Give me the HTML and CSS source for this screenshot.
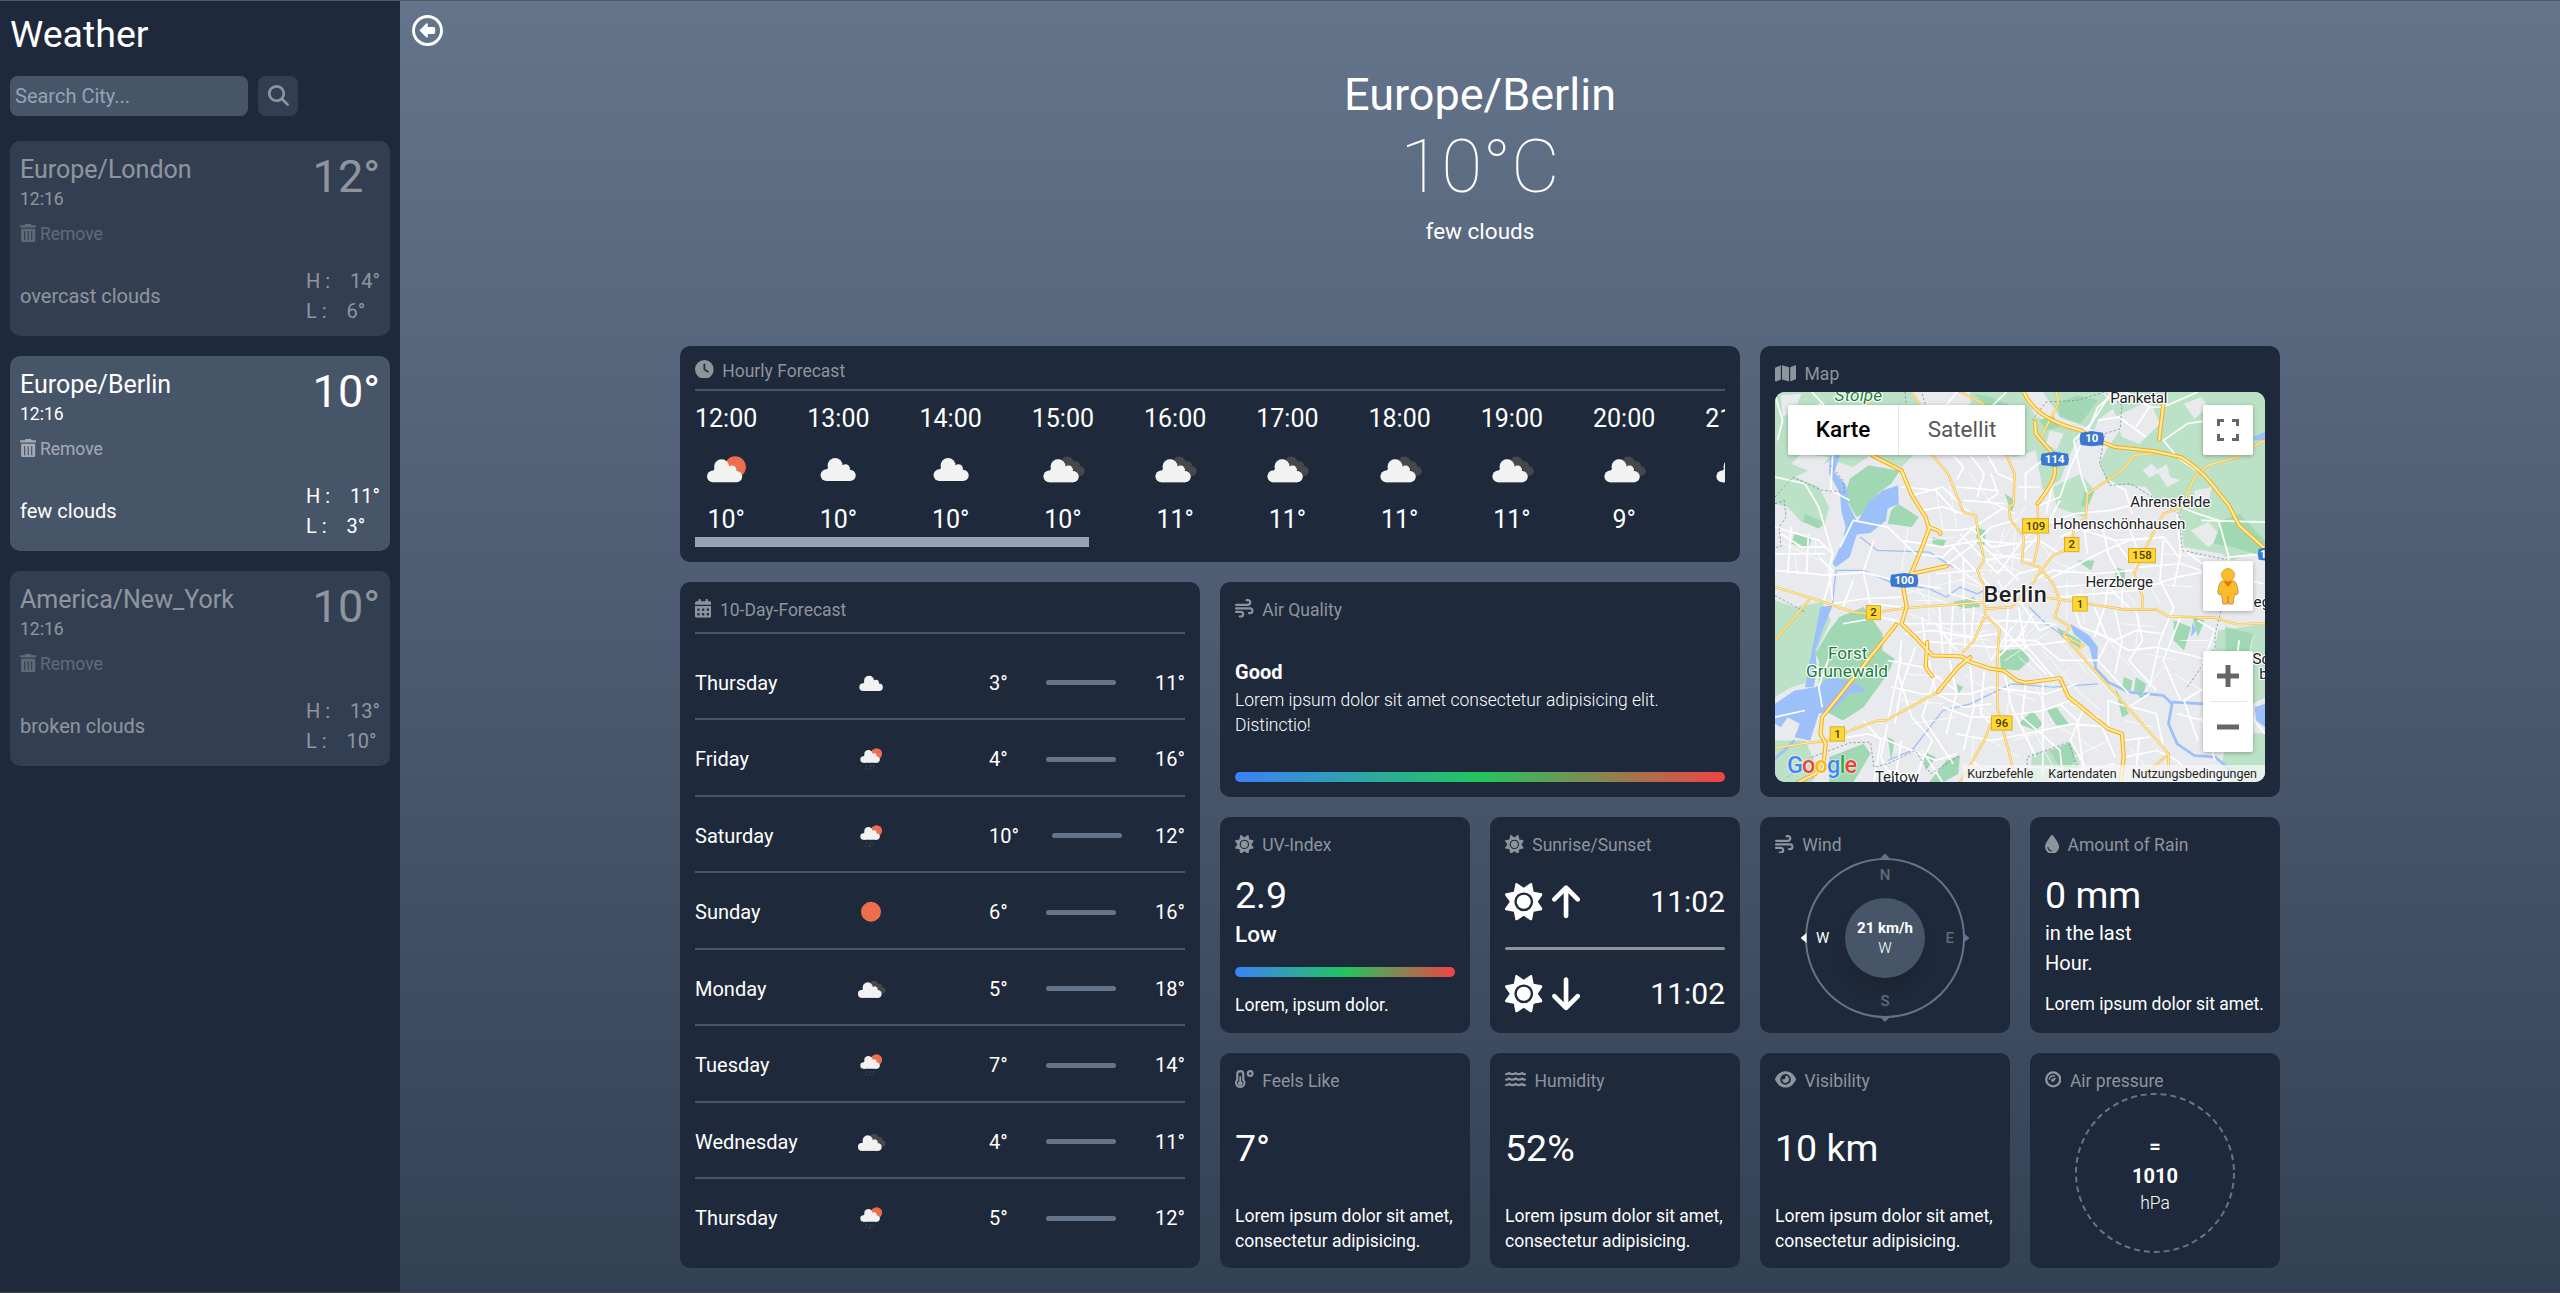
FILE: index.html
```html
<!DOCTYPE html>
<html lang="en">
<head>
<meta charset="utf-8">
<title>Weather</title>
<link rel="stylesheet" href="styles.css">
</head>
<body>
<svg class="defs" aria-hidden="true">
  <symbol id="clock" viewBox="0 0 512 512"><path d="M256 0a256 256 0 1 1 0 512A256 256 0 1 1 256 0zM232 120V256c0 8 4 15.5 10.7 20l96 64c11 7.4 25.9 4.4 33.3-6.7s4.4-25.9-6.7-33.3L280 243.2V120c0-13.3-10.7-24-24-24s-24 10.7-24 24z"/></symbol>
  <symbol id="trash" viewBox="0 0 448 512"><path d="M135.2 17.7C140.6 6.8 151.7 0 163.8 0H284.2c12.1 0 23.2 6.8 28.6 17.7L320 32h96c17.7 0 32 14.3 32 32s-14.3 32-32 32H32C14.3 96 0 81.7 0 64S14.3 32 32 32h96l7.2-14.3zM32 128H416V448c0 35.3-28.7 64-64 64H96c-35.3 0-64-28.7-64-64V128zm96 64c-8.8 0-16 7.2-16 16V432c0 8.8 7.2 16 16 16s16-7.2 16-16V208c0-8.8-7.2-16-16-16zm96 0c-8.8 0-16 7.2-16 16V432c0 8.8 7.2 16 16 16s16-7.2 16-16V208c0-8.8-7.2-16-16-16zm96 0c-8.8 0-16 7.2-16 16V432c0 8.8 7.2 16 16 16s16-7.2 16-16V208c0-8.8-7.2-16-16-16z"/></symbol>
  <symbol id="search" viewBox="0 0 512 512"><path d="M416 208c0 45.9-14.9 88.3-40 122.7L502.6 457.4c12.5 12.5 12.5 32.8 0 45.3s-32.8 12.5-45.3 0L330.7 376c-34.4 25.2-76.8 40-122.7 40C93.1 416 0 322.9 0 208S93.1 0 208 0S416 93.1 416 208zM208 352a144 144 0 1 0 0-288 144 144 0 1 0 0 288z"/></symbol>
  <symbol id="eye" viewBox="0 0 576 512"><path d="M288 32c-80.8 0-145.5 36.8-192.6 80.6C48.6 156 17.3 208 2.5 243.7c-3.3 7.9-3.3 16.7 0 24.6C17.3 304 48.6 356 95.4 399.4C142.5 443.2 207.2 480 288 480s145.5-36.8 192.6-80.6c46.8-43.5 78.1-95.4 93-131.1c3.3-7.9 3.3-16.7 0-24.6c-14.9-35.7-46.2-87.7-93-131.1C433.5 68.8 368.8 32 288 32zM144 256a144 144 0 1 1 288 0 144 144 0 1 1 -288 0zm144-64c0 35.3-28.7 64-64 64c-7.1 0-13.9-1.2-20.3-3.3c-5.5-1.8-11.9 1.6-11.7 7.4c.3 6.9 1.3 13.8 3.2 20.7c13.7 51.2 66.4 81.6 117.6 67.9s81.6-66.4 67.9-117.6c-11.1-41.5-47.8-69.4-88.6-71.1c-5.8-.2-9.2 6.1-7.4 11.7c2.1 6.4 3.3 13.2 3.3 20.3z"/></symbol>
  <symbol id="wind" viewBox="0 0 512 512"><path d="M288 32c0 17.7 14.3 32 32 32h32c17.7 0 32 14.3 32 32s-14.3 32-32 32H32c-17.7 0-32 14.3-32 32s14.3 32 32 32H352c53 0 96-43 96-96s-43-96-96-96H320c-17.7 0-32 14.3-32 32zm64 352c0 17.7 14.3 32 32 32h32c53 0 96-43 96-96s-43-96-96-96H32c-17.7 0-32 14.3-32 32s14.3 32 32 32H416c17.7 0 32 14.3 32 32s-14.3 32-32 32H384c-17.7 0-32 14.3-32 32zM128 512h32c53 0 96-43 96-96s-43-96-96-96H32c-17.7 0-32 14.3-32 32s14.3 32 32 32H160c17.7 0 32 14.3 32 32s-14.3 32-32 32H128c-17.7 0-32 14.3-32 32s14.3 32 32 32z"/></symbol>
  <symbol id="drop" viewBox="0 0 384 512"><path d="M192 512C86 512 0 426 0 320C0 228.8 130.2 57.7 166.6 11.7C172.6 4.2 181.5 0 191.1 0h1.8c9.6 0 18.5 4.2 24.5 11.7C253.8 57.7 384 228.8 384 320c0 106-86 192-192 192zM96 336c0-8.8-7.2-16-16-16s-16 7.2-16 16c0 61.9 50.1 112 112 112c8.8 0 16-7.2 16-16s-7.2-16-16-16c-44.2 0-80-35.8-80-80z"/></symbol>
  <symbol id="sun" viewBox="0 0 512 512"><path d="M361.5 1.2c5 2.1 8.6 6.6 9.6 11.9L391 121l107.9 19.8c5.3 1 9.8 4.6 11.9 9.6s1.5 10.7-1.6 15.2L446.9 256l62.3 90.3c3.1 4.5 3.7 10.2 1.6 15.2s-6.6 8.6-11.9 9.6L391 391 371.1 498.9c-1 5.3-4.6 9.8-9.6 11.9s-10.7 1.5-15.2-1.6L256 446.9l-90.3 62.3c-4.5 3.1-10.2 3.7-15.2 1.6s-8.6-6.6-9.6-11.9L121 391 13.1 371.1c-5.3-1-9.8-4.6-11.9-9.6s-1.5-10.7 1.6-15.2L65.1 256 2.8 165.7c-3.1-4.5-3.7-10.2-1.6-15.2s6.6-8.6 11.9-9.6L121 121 140.9 13.1c1-5.3 4.6-9.8 9.6-11.9s10.7-1.5 15.2 1.6L256 65.1 346.3 2.8c4.5-3.1 10.2-3.7 15.2-1.6zM160 256a96 96 0 1 1 192 0 96 96 0 1 1 -192 0zm224 0a128 128 0 1 0 -256 0 128 128 0 1 0 256 0z"/></symbol>
  <symbol id="up" viewBox="0 0 384 512"><path d="M214.6 41.4c-12.5-12.5-32.8-12.5-45.3 0l-160 160c-12.5 12.5-12.5 32.8 0 45.3s32.8 12.5 45.3 0L160 141.2V448c0 17.7 14.3 32 32 32s32-14.3 32-32V141.2L329.4 246.6c12.5 12.5 32.8 12.5 45.3 0s12.5-32.8 0-45.3l-160-160z"/></symbol>
  <symbol id="map" viewBox="0 0 576 512"><path d="M384 476.1L192 421.2V35.9L384 90.8V476.1zm32-1.2V88.4L543.1 37.5c15.8-6.3 32.9 5.3 32.9 22.3V394.6c0 9.8-6 18.6-15.1 22.3L416 474.8zM15.1 95.1L160 37.2V423.6L32.9 474.5C17.1 480.8 0 469.2 0 452.2V117.4c0-9.8 6-18.6 15.1-22.3z"/></symbol>
  <symbol id="calendar" viewBox="0 0 448 512"><path d="M128 0c17.7 0 32 14.3 32 32V64H288V32c0-17.7 14.3-32 32-32s32 14.3 32 32V64h48c26.5 0 48 21.5 48 48v48H0V112C0 85.5 21.5 64 48 64H96V32c0-17.7 14.3-32 32-32zM0 192H448V464c0 26.5-21.5 48-48 48H48c-26.5 0-48-21.5-48-48V192zm64 80v32c0 8.8 7.2 16 16 16h32c8.8 0 16-7.2 16-16V272c0-8.8-7.2-16-16-16H80c-8.8 0-16 7.2-16 16zm128 0v32c0 8.8 7.2 16 16 16h32c8.8 0 16-7.2 16-16V272c0-8.8-7.2-16-16-16H208c-8.8 0-16 7.2-16 16zm144-16c-8.8 0-16 7.2-16 16v32c0 8.8 7.2 16 16 16h32c8.8 0 16-7.2 16-16V272c0-8.8-7.2-16-16-16H336zM64 400v32c0 8.8 7.2 16 16 16h32c8.8 0 16-7.2 16-16V400c0-8.8-7.2-16-16-16H80c-8.8 0-16 7.2-16 16zm144-16c-8.8 0-16 7.2-16 16v32c0 8.8 7.2 16 16 16h32c8.8 0 16-7.2 16-16V400c0-8.8-7.2-16-16-16H208zm112 16v32c0 8.8 7.2 16 16 16h32c8.8 0 16-7.2 16-16V400c0-8.8-7.2-16-16-16H336c-8.8 0-16 7.2-16 16z"/></symbol>
  <symbol id="thermo" viewBox="0 0 512 512"><path fill="none" stroke="currentColor" stroke-width="60" d="M62 112a82 82 0 0 1 164 0V270a114 114 0 1 1-164 0Z"/><path d="M120 190a24 24 0 0 1 48 0V308a62 62 0 1 1-48 0Z"/><circle cx="416" cy="96" r="66" fill="none" stroke="currentColor" stroke-width="60"/></symbol>
  <symbol id="waves" viewBox="0 0 576 512"><g fill="none" stroke="currentColor" stroke-width="62" stroke-linecap="round"><path d="M32 112Q90 110 115 84Q200 142 288 84Q376 142 461 84Q490 110 544 112"/><path d="M32 262Q90 260 115 234Q200 292 288 234Q376 292 461 234Q490 260 544 262"/><path d="M32 412Q90 410 115 384Q200 442 288 384Q376 442 461 384Q490 410 544 412"/></g></symbol>
  <symbol id="gauge" viewBox="0 0 448 512"><circle cx="224" cy="256" r="190" fill="none" stroke="currentColor" stroke-width="64"/><path d="M118 268a106 106 0 0 1 160-98" fill="none" stroke="currentColor" stroke-width="40"/><path d="M318 196 L250 298a42 42 0 1 1-50-56Z"/></symbol>

  <g id="cloud"><circle cx="5.9" cy="17.1" r="5.9"/><circle cx="14.6" cy="7.5" r="7.5"/><circle cx="25" cy="10.6" r="4.4"/><circle cx="29.6" cy="17.4" r="5.6"/><path d="M5.9 12L8 9L25 8L29.6 12V23H5.9Z"/></g>
  <symbol id="w-cloud" viewBox="0 0 62 66"><use href="#cloud" x="13.5" y="22" fill="#f2f2f0"/></symbol>
  <symbol id="w-few" viewBox="0 0 62 66"><circle cx="40.2" cy="31" r="10.7" fill="#ec6e4c"/><use href="#cloud" x="12" y="23.2" fill="#f2f2f0"/></symbol>
  <symbol id="w-broken" viewBox="0 0 62 66"><g fill="#48484a"><circle cx="35.4" cy="27" r="6.5"/><circle cx="43.3" cy="30" r="4.8"/><circle cx="48" cy="35" r="4.8"/><path d="M34 27h9l5 13H34Z"/></g><use href="#cloud" x="11.5" y="23.2" fill="#f2f2f0" stroke="#1e293b" stroke-width=".6"/><use href="#cloud" x="11.5" y="23.2" fill="#f2f2f0"/></symbol>
  <symbol id="w-rain" viewBox="0 0 62 66"><circle cx="39.3" cy="25.2" r="8.4" fill="#ec6e4c"/><use href="#cloud" transform="translate(15 19.4) scale(.83)" fill="#f2f2f0"/><path d="M25 42l-1.4 2.6M31 42l-1.4 2.6M35.6 42l-1.4 2.6M23 46.5l-1.2 2M29 46.5l-1.2 2.4M33 46.5l-1.2 2.4" stroke="#48484a" stroke-width="1.6"/></symbol>
  <symbol id="w-sun" viewBox="0 0 62 66"><circle cx="31" cy="32.6" r="15" fill="#ec6e4c"/></symbol>
</svg>

<div class="app">
  <aside class="sidebar">
    <h1 class="brand">Weather</h1>
    <form class="search">
      <input class="search-input" type="text" placeholder="Search City...">
      <button class="search-btn" type="button"><svg><use href="#search"/></svg></button>
    </form>
    <div class="cities">
      <article class="city dim">
        <div class="city-top"><div><h2>Europe/London</h2><p class="time">12:16</p><p class="remove"><svg><use href="#trash"/></svg>Remove</p></div><span class="city-temp">12°</span></div>
        <div class="city-bottom"><span>overcast clouds</span><div class="hl"><p>H :<b>14°</b></p><p>L :<b>6°</b></p></div></div>
      </article>
      <article class="city">
        <div class="city-top"><div><h2>Europe/Berlin</h2><p class="time">12:16</p><p class="remove"><svg><use href="#trash"/></svg>Remove</p></div><span class="city-temp">10°</span></div>
        <div class="city-bottom"><span>few clouds</span><div class="hl"><p>H :<b>11°</b></p><p>L :<b>3°</b></p></div></div>
      </article>
      <article class="city dim">
        <div class="city-top"><div><h2>America/New_York</h2><p class="time">12:16</p><p class="remove"><svg><use href="#trash"/></svg>Remove</p></div><span class="city-temp">10°</span></div>
        <div class="city-bottom"><span>broken clouds</span><div class="hl"><p>H :<b>13°</b></p><p>L :<b>10°</b></p></div></div>
      </article>
    </div>
  </aside>

  <main class="main">
    <svg class="back" viewBox="0 0 31 31"><circle cx="15.5" cy="15.5" r="14" fill="none" stroke="#fff" stroke-width="2.9"/><path d="M7.4 15.4L14.2 8.6Q15.8 7.6 15.8 9.4V12H21.6Q23.2 12 23.2 13.4V17.6Q23.2 19 21.6 19H15.8V21.6Q15.8 23.2 14.2 22.2Z" fill="#fff"/></svg>
    <header class="hero">
      <h2>Europe/Berlin</h2>
      <p class="hero-temp">10°C</p>
      <p class="hero-desc">few clouds</p>
    </header>

    <section class="grid">
      <div class="card hourly">
        <h3 class="head"><svg class="i1"><use href="#clock"/></svg>Hourly Forecast</h3>
        <div class="hours">
          <div><span>12:00</span><svg><use href="#w-few"/></svg><span>10°</span></div>
          <div><span>13:00</span><svg><use href="#w-cloud"/></svg><span>10°</span></div>
          <div><span>14:00</span><svg><use href="#w-cloud"/></svg><span>10°</span></div>
          <div><span>15:00</span><svg><use href="#w-broken"/></svg><span>10°</span></div>
          <div><span>16:00</span><svg><use href="#w-broken"/></svg><span>11°</span></div>
          <div><span>17:00</span><svg><use href="#w-broken"/></svg><span>11°</span></div>
          <div><span>18:00</span><svg><use href="#w-broken"/></svg><span>11°</span></div>
          <div><span>19:00</span><svg><use href="#w-broken"/></svg><span>11°</span></div>
          <div><span>20:00</span><svg><use href="#w-broken"/></svg><span>9°</span></div>
          <div><span>21:00</span><svg><use href="#w-broken"/></svg></div>
        </div>
        <div class="scroll"><i></i></div>
      </div>

      <div class="card mapcard">
        <h3 class="head"><svg class="i3"><use href="#map"/></svg>Map</h3>
        <div class="mapbox">
          <svg class="mapsvg" viewBox="73 155 1422 1171" preserveAspectRatio="none">
            <rect x="73" y="155" width="1422" height="1171" fill="#e8eaed"/>
            <g fill="#bbe2c6">
              <path d="M73 155H470L500 200L560 230L520 300L440 380L350 345L300 380L240 360L190 380L130 410L73 430Z"/>
              <path d="M73 420L130 410L200 440L230 500L215 560L150 545L110 500L73 490Z"/>
              <path d="M640 155H790L830 230L900 250L960 275L930 340L900 420L850 450L830 330L770 350L700 340L640 200Z"/>
              <path d="M850 155H1020L1060 200L1010 240L1000 270L900 230Z"/>
              <path d="M1040 320L1080 260L1050 200L1100 155H1495V620L1400 660L1370 640L1260 620L1245 510L1180 480L1150 440L1040 430L1015 370Z"/>
              <path d="M73 780L130 800L210 785L235 840L190 940L185 1020L120 1040L73 1070Z"/>
              <path d="M1360 870L1495 850V1070L1440 1100L1330 1020Z"/>
              <path d="M73 1200L160 1200L200 1290L180 1326H73Z"/>
              <path d="M880 440L960 400L1000 450L970 530L890 500Z"/>
              <path d="M1390 1170L1495 1180V1326H1400L1370 1270Z"/>
              <path d="M820 1240L940 1210L960 1280L860 1326H810Z"/>
            </g>
            <g fill="#e8eaed">
              <path d="M90 165L150 160L130 210L95 230Z"/><path d="M150 340L230 350L190 400L120 370Z"/><path d="M1060 230L1160 180L1190 250L1130 310L1080 290Z"/><path d="M1180 390L1210 370L1220 410L1250 420L1210 440Z"/><path d="M1140 390L1165 370L1190 395L1160 412Z"/><path d="M1260 190L1310 170L1330 200L1290 235Z"/><path d="M1290 450L1340 440L1330 500L1290 490Z"/><path d="M1350 200L1400 215L1380 250L1340 230Z"/><path d="M530 190L600 165L640 195L600 240L540 235Z"/><path d="M690 290L760 275L770 330L710 325Z"/><path d="M870 270L910 280L890 330L860 310Z"/><path d="M1400 900L1460 890L1450 950L1400 970Z"/><path d="M1280 570L1330 545L1370 590L1330 620Z"/>
            </g>
            <g fill="#a0d8b3">
              <path d="M290 415L345 375L435 392L410 430L370 460L345 510L310 530L275 470Z"/>
              <path d="M230 870L260 830L330 800L365 850L385 880L385 930L420 955L400 1000L330 1100L270 1140L215 1110L200 1060L200 960L190 940Z"/>
              <path d="M725 930L800 925L812 960L780 990L728 985Z"/>
              <path d="M430 490L490 530L470 560L400 550L410 510Z"/>
              <path d="M1370 540L1420 520L1495 600V650L1400 620L1345 610Z"/>
              <path d="M890 190L950 165L1010 180L960 250L900 230Z"/>
              <path d="M650 160L700 170L760 200L740 250L700 210Z"/>
              <path d="M1380 860L1460 880L1440 980L1380 960Z"/>
              <path d="M590 785L650 770L670 800L610 805Z"/><path d="M655 560L685 570L680 620L660 610Z"/><path d="M970 455L1000 450L985 490L960 500Z"/><path d="M1060 680L1090 690L1085 740L1060 730Z"/><path d="M1230 840L1280 860L1260 930L1230 900Z"/><path d="M1285 830L1320 840L1300 890Z"/><path d="M780 1150L820 1110L850 1150L830 1170Z"/><path d="M860 1110L890 1100L925 1150L890 1155Z"/><path d="M1085 1010L1110 1020L1105 1050L1080 1045Z"/><path d="M1120 1010L1150 1030L1140 1080L1115 1050Z"/><path d="M600 1030L620 1040L605 1060Z"/><path d="M950 660L1000 660L990 690Z"/><path d="M130 580L180 590L170 625L120 610Z"/><path d="M570 1260L610 1245L605 1300L560 1326H520Z"/><path d="M400 1190L420 1200L410 1260Z"/><path d="M230 1250L330 1210L350 1240L300 1326H230Z"/><path d="M870 1230L930 1205L945 1260L910 1300Z"/><path d="M600 215L640 215L650 250L610 255Z"/><path d="M890 860L960 900L960 925L905 890Z"/><path d="M740 460L770 480L760 520Z"/><path d="M530 590L570 600L560 620L530 610Z"/><path d="M160 520L215 545L200 565L155 545Z"/><path d="M1060 1040L1100 1120L1080 1130Z"/><path d="M840 240L880 225L900 260L860 270Z"/><path d="M500 1230L540 1250L510 1290Z"/>
            </g>
            <g fill="#9cc0f9">
              <path d="M232 345H262L245 395L280 435L285 490L312 545L345 485L385 450L430 435L432 490L400 505L395 540L350 578L310 582L290 650L250 680L240 670L270 600L278 560L265 510L262 460L230 400Z"/>
              <path d="M205 800L240 795L215 860L190 930L195 990L185 1040L160 1040L180 930Z"/>
              <path d="M73 1090L130 1050L190 1040L240 1010L300 1025L340 1050L290 1060L240 1110L200 1120L175 1200L130 1190L145 1150L110 1130L90 1160L73 1150Z"/>
              <path d="M930 850L985 885L1010 920L1005 1000L985 920L940 880Z"/>
              <path d="M1465 1100L1495 1090V1160L1470 1140Z"/><path d="M1460 290L1495 275V300L1465 300Z"/><path d="M1285 845L1295 870L1280 890Z"/>
            </g>
            <g fill="none" stroke="#9cc0f9">
              <path stroke-width="8" d="M1000 980L1040 1025L1100 1055L1200 1065L1225 1090L1215 1150L1240 1210L1290 1245L1350 1250L1410 1300M1225 1085L1320 1090M73 1255L130 1200"/>
              <path stroke-width="4" d="M250 690L330 690L420 730L520 745L570 770L610 740L660 760L700 740M320 590L370 630L520 635L590 680M810 800L860 850L930 900M400 1260L470 1230L560 1110L640 1090L760 1030L880 1040L1010 1030M250 690L240 790M690 740L780 780"/>
            </g>
            <g fill="none" stroke="#fff" stroke-width="5" stroke-linejoin="round">
              <path d="M73 410L160 430L200 500L240 640L230 690L240 780M73 690L230 705L330 695L440 725L560 745M200 650L240 690L215 780M73 560L200 600L240 640M120 560L110 700M170 580L165 700M73 640L220 640M90 580L150 620L220 620M240 345L235 450L290 480M262 620L300 540L400 560L480 640M300 720L270 800M330 700L350 790L440 800M270 850L380 830L440 845M240 790L330 775L440 770"/>
              <path d="M440 440L540 450L600 520M470 465L560 440L640 520M500 510L560 500L620 520M520 565L600 570L660 560M440 600L560 620L660 600L770 610M480 640L560 650L650 560L740 500M590 620L700 740M610 580L720 700M640 560L700 620M560 680L640 620L700 560L770 540M660 600L780 720M680 660L790 640L860 560L900 480M700 640L820 660M700 620L840 600L900 640M720 700L790 600L840 560M540 700L660 690M580 700L580 760L690 790M620 650L620 780M570 660L680 740M740 740L780 700L850 680M720 720L740 760L790 790L840 870M820 720L880 690L1000 700L1110 690M860 720L900 700L1010 640L1100 600L1200 590M880 740L1030 730L1100 800M900 770L1000 760L1120 750L1240 710L1340 690"/>
              <path d="M440 850L560 850L680 850L740 840L880 850M450 880L530 870L640 890L720 880M480 900L600 910L700 920L860 910L930 900M500 830L510 920M550 800L560 940M590 790L580 950M620 790L625 930M650 800L640 920M540 850L600 930M750 800L740 930M780 800L800 930M820 820L780 890L880 1010M840 870L890 850M740 900L830 900L900 960L1010 960M700 830L860 1000M760 860L700 960M800 870L720 950M520 960L540 1060L620 1100L700 1090M440 900L430 1000L470 1130L530 1200M400 960L500 980L600 1050M410 1040L500 1060L640 1060L700 1040L860 1060L950 1030M440 950L400 1140M480 920L440 1040L420 1150M540 1000L500 1130L590 1270M580 960L600 1060L570 1180M640 980L650 1100L620 1230M680 990L670 1120L700 1150M560 1100L640 1130L720 1130L850 1110L930 1080M600 1180L700 1200L800 1180L940 1150L1040 1160M740 1000L760 1100L830 1250M800 1030L790 1130L900 1230L910 1326M850 1020L850 1300M900 1090L950 1140L970 1300M930 1090L1010 1130L1060 1250M970 1100L930 1200L980 1290L1060 1270"/>
              <path d="M700 400L720 460L690 480L770 520M600 440L720 450M620 480L740 490M640 345L680 400L660 470M690 345L720 400L765 420M800 480L800 400L850 360M840 440L780 440M830 500L900 470L930 380L990 250L1050 155M860 520L880 420M838 560L940 520L1050 510L1160 480M900 590L970 560L980 640M940 560L1060 600L1100 660M1020 540L1040 640L1080 720L1080 800M1100 560L1130 640L1110 720M1060 600L1200 590L1245 650M1200 600L1190 720L1230 800L1190 900L1160 1040M1240 520L1250 640L1230 740M1250 620L1350 700M1130 680L1250 670L1310 690M1040 730L1030 800L1000 890M940 800L960 860L1060 900L1120 870L1200 880M1000 800L1040 900L1010 960L1100 1060M1060 810L1080 900L1060 1000M1120 810L1140 900L1100 960L1180 1050M1000 870L1100 930L1180 920L1340 960M1250 830L1200 960L1250 1080M1300 840L1350 870L1310 980L1340 1030L1260 1080L1300 1200M1160 1060L1100 1100L1040 1080L1040 1160M1110 1100L1180 1120L1200 1220M1080 1200L1160 1190M1090 1250L1180 1230L1240 1260L1300 1326M1130 1190L1120 1300M1240 1120L1350 1150L1440 1200"/>
              <path d="M1060 155L1010 200L990 250L940 300M1010 240L1070 230L1150 290M1090 155L1160 200L1200 200L1300 155M1160 200L1120 260M1200 300L1270 250L1330 240L1400 330M1250 500L1300 520L1360 540L1390 650L1495 640M1390 650L1370 700L1490 730M1310 540L1495 545M1040 420L1090 450L1110 520M980 460L960 400L940 300M1310 400L1240 350L1200 300M73 165L95 240L80 300M180 155L230 210L200 190M500 200L560 210L600 155M540 240L600 270M700 200L745 155M210 1100L200 1040L230 950M330 1140L380 1200L360 1326M400 1150L380 1250L400 1290L470 1326M230 1200L340 1180L400 1200L540 1260L600 1240M440 1200L420 1326M500 1230L560 1326M530 1200L500 1260L480 1326M640 1260L700 1300L820 1280L1060 1290M330 690L360 600M73 1130L160 1110M1310 1130L1350 1260M1420 900L1400 1060L1495 1180M590 345L620 380L600 420"/>
            </g>
            <g fill="none" stroke="#fff" stroke-width="2.6" stroke-opacity=".85">
              <path d="M440 740L690 830M450 760L680 700M460 820L660 900M470 720L560 850M520 700L520 850M610 720L720 760M640 690L750 690M650 640L800 700M660 580L740 650M740 560L700 700M770 560L760 700M800 500L720 620M840 600L880 660L960 700M900 600L860 660M920 720L920 840M960 730L970 850M990 700L1000 790M1060 720L1120 790M1140 700L1190 790M1160 730L1290 740M1200 640L1330 650M460 560L440 690M500 600L600 590M540 450L560 560M580 440L600 560M640 400L720 520M450 1000L560 1010M440 1080L560 1090M470 1150L600 1130M620 1000L720 1070M660 1090L760 1180M720 1040L830 1080M760 1010L740 1160M830 1040L880 1150M900 900L980 1000M850 930L960 1060M780 950L850 1010M930 980L870 1040M960 1060L1020 1110M980 980L1070 1080M760 1200L830 1180L880 1280M650 1180L640 1326M700 1200L780 1250M900 1160L1010 1230M940 1250L1040 1200M1040 900L1120 1000M1080 850L1180 860M1130 830L1120 920M1150 940L1240 960M1200 980L1140 1060M1250 900L1330 900M1230 1000L1330 1060M1090 1140L1170 1160M1100 1220L1150 1280M130 640L140 705M190 590L190 640M80 600L200 660M480 780L560 780M550 880L700 900M570 900L690 870M660 860L700 960M740 960L860 880M800 800L760 870M850 830L800 890"/>
            </g>
            <g fill="none" stroke="#80868b" stroke-width="2.2" stroke-dasharray="7 6">
              <path d="M73 470L125 410L210 450L275 455L270 420L235 375M73 490L100 480L105 530L85 560L90 620L73 620M450 155L455 195M500 160L510 195M745 190L760 230M820 240L860 185L950 180L1030 155L1080 195L1075 265L1030 280L1015 370L1045 435L1105 430L1200 490L1245 520L1255 630L1385 658M1370 800L1350 880L1350 920L1270 1040M73 765L160 815M110 1310L180 1250L290 1207L350 1205L360 1280L400 1270L480 1230L525 1300L608 1245M805 1300V1250L925 1205L950 1280"/>
            </g>
            <g fill="none" stroke-linejoin="round" stroke-linecap="round">
              <g stroke="#f6bd3f" stroke-width="7"><path id="b-roads" d="M73 740L200 780L300 815L340 820L450 803L680 785M170 780L73 900M850 770L940 783L1090 808L1180 808L1215 828L1350 832L1415 852L1495 848M73 1222L150 1210L230 1200M240 1190L370 1140L395 1140L545 1055M530 345L575 400L620 515L655 525L665 590L680 660L660 690L680 740L683 825L725 865L718 950L718 1100L735 1170L775 1326M683 825L650 900L620 935M745 345L768 400L765 490L752 500L755 535L795 590L790 665L840 680L880 730L900 780L885 830L930 860L910 885L1195 1215L1215 1240L1215 1326M910 885L968 915L950 930M835 490L838 600L825 665M683 805L760 800L820 730L845 690L880 645L935 620L940 560L975 530L980 460L1080 390L1115 345L1170 340M1495 300L1460 320L1415 350L1330 375L1290 410L1255 500L1200 520L1150 620L1115 700L1140 770L1138 808M700 1150L680 1200L610 1326M1215 1240L1150 1300M890 155L895 190L845 290M610 155L680 190M470 155L495 195M350 170L345 195"/></g>
              <use href="#b-roads" stroke="#fde9a8" stroke-width="3.6"/>
              <g stroke="#f9ab00" stroke-width="12"><path id="motorways" d="M795 155C815 200 850 240 960 270L1010 300L1060 320L1170 332L1250 350Q1300 380 1340 430L1390 495L1420 555L1495 625M828 245L830 280Q870 330 885 345V400Q880 430 835 490M355 345L440 390L470 465L510 530L520 565L500 620L470 695M520 560L550 572L553 580M470 700L572 677M470 695L445 740L455 800L440 850L480 890L530 945L615 948L640 965L700 985L735 990L775 1020L800 1027L900 1013L925 1070L1040 1165L1080 1180L1085 1250L1075 1326M425 852L210 1130L205 1180L220 1210L215 1260L190 1300L140 1326M515 905L510 980L530 1008M545 1055L605 980L640 950M1200 190L1188 298"/></g>
              <use href="#motorways" stroke="#fde9a8" stroke-width="6.5"/>
            </g>
            <g class="shield-blue">
              <path d="M960 277L992 272L1025 277L1028 295L1025 314L992 318L960 314L957 295Z"/><path d="M847 340L885 334L923 340L926 357L923 374L885 379L847 374L844 357Z"/><path d="M410 703L448 698L486 703L489 720L486 738L448 742L410 738L407 720Z"/><path d="M1477 625L1510 620V662L1477 658L1474 642Z"/>
            </g>
            <g class="shield-yellow">
              <rect x="791" y="535" width="76" height="43"/><rect x="913" y="591" width="42" height="43"/><rect x="1099" y="624" width="78" height="43"/><rect x="937" y="769" width="42" height="43"/><rect x="338" y="795" width="41" height="43"/><rect x="701" y="1126" width="60" height="43"/><rect x="233" y="1159" width="42" height="43"/>
            </g>
            <g class="num white"><text x="992" y="306">10</text><text x="885" y="368">114</text><text x="448" y="731">100</text><text x="1490" y="653">1</text></g>
            <g class="num"><text x="829" y="568">109</text><text x="934" y="624">2</text><text x="1138" y="657">158</text><text x="958" y="802">1</text><text x="359" y="828">2</text><text x="731" y="1159">96</text><text x="254" y="1192">1</text></g>
            <g class="place">
              <text class="green slant" x="246" y="182" textLength="138">Stolpe</text>
              <text x="1046" y="188" textLength="166">Panketal</text>
              <text x="1104" y="499" textLength="232">Ahrensfelde</text>
              <text x="880" y="565" textLength="384">Hohenschönhausen</text>
              <text x="974" y="739" textLength="196">Herzberge</text>
              <text class="big" x="678" y="786" textLength="184">Berlin</text>
              <text class="green" x="227" y="957" textLength="114">Forst</text>
              <text class="green" x="163" y="1010" textLength="238">Grunewald</text>
              <text x="363" y="1324" textLength="128">Teltow</text>
              <text x="1462" y="800">eg</text><text x="1459" y="972">Sc</text><text x="1478" y="1016">b</text>
            </g>
          </svg>
          <div class="maptype"><span class="on">Karte</span><span>Satellit</span></div>
          <div class="ctl full"><svg viewBox="0 0 22 22"><path d="M1.5 7V1.5H7M15 1.5H20.5V7M20.5 15V20.5H15M7 20.5H1.5V15" fill="none" stroke="#666" stroke-width="3"/></svg></div>
          <div class="ctl peg"><svg viewBox="0 0 22 37"><path d="M5 13Q1.5 15 .8 25Q2 28 4.5 26L6 36H10.3L11 28L11.7 36H16L17.5 26Q20 28 21.2 25Q20.5 15 17 13Z" fill="#fbbc2c" stroke="#c98a3b" stroke-width=".9"/><path d="M6.5 13.5L11 19L15.5 13.5Z" fill="#e8710a"/><circle cx="11" cy="7" r="6.4" fill="#fbbc2c" stroke="#d79838" stroke-width=".9"/></svg></div>
          <div class="ctl zoom"><svg viewBox="0 0 22 22"><path d="M0 11H22M11 0V22" stroke="#666" stroke-width="5"/></svg><i></i><svg viewBox="0 0 22 22"><path d="M0 11H22" stroke="#666" stroke-width="5"/></svg></div>
          <div class="google"><span class="gb">G</span><span class="gr">o</span><span class="gy">o</span><span class="gb">g</span><span class="gg">l</span><span class="gr">e</span></div>
          <div class="terms"><span>Kurzbefehle</span><span>Kartendaten</span><span>Nutzungsbedingungen</span></div>
        </div>
      </div>

      <div class="card daily">
        <h3 class="head"><svg class="i2"><use href="#calendar"/></svg>10-Day-Forecast</h3>
        <div class="days">
          <div><span>Thursday</span><svg><use href="#w-cloud"/></svg><p><span>3°</span><i></i><span>11°</span></p></div>
          <div><span>Friday</span><svg><use href="#w-rain"/></svg><p><span>4°</span><i></i><span>16°</span></p></div>
          <div><span>Saturday</span><svg><use href="#w-rain"/></svg><p><span>10°</span><i></i><span>12°</span></p></div>
          <div><span>Sunday</span><svg><use href="#w-sun"/></svg><p><span>6°</span><i></i><span>16°</span></p></div>
          <div><span>Monday</span><svg><use href="#w-broken"/></svg><p><span>5°</span><i></i><span>18°</span></p></div>
          <div><span>Tuesday</span><svg><use href="#w-rain"/></svg><p><span>7°</span><i></i><span>14°</span></p></div>
          <div><span>Wednesday</span><svg><use href="#w-broken"/></svg><p><span>4°</span><i></i><span>11°</span></p></div>
          <div><span>Thursday</span><svg><use href="#w-rain"/></svg><p><span>5°</span><i></i><span>12°</span></p></div>
        </div>
      </div>

      <div class="card wide">
        <h3 class="head"><svg class="i1"><use href="#wind"/></svg>Air Quality</h3>
        <div><p class="good">Good</p><p class="note light">Lorem ipsum dolor sit amet consectetur adipisicing elit. Distinctio!</p></div>
        <div class="scale"></div>
      </div>

      <div class="card uv">
        <h3 class="head"><svg class="i1"><use href="#sun"/></svg>UV-Index</h3>
        <p class="value">2.9</p>
        <p class="low">Low</p>
        <div class="scale"></div>
        <p class="note">Lorem, ipsum dolor.</p>
      </div>

      <div class="card sunset">
        <h3 class="head"><svg class="i1"><use href="#sun"/></svg>Sunrise/Sunset</h3>
        <div class="sunrow"><svg class="s"><use href="#sun"/></svg><svg class="a"><use href="#up"/></svg><span>11:02</span></div>
        <hr>
        <div class="sunrow"><svg class="s"><use href="#sun"/></svg><svg class="a down"><use href="#up"/></svg><span>11:02</span></div>
      </div>

      <div class="card windcard">
        <h3 class="head"><svg class="i1"><use href="#wind"/></svg>Wind</h3>
        <div class="compass">
          <i class="tick tn"></i><i class="tick te"></i><i class="tick ts"></i><i class="tick tw"></i>
          <span class="n">N</span>
          <div class="mid"><span class="w">W</span><div class="hub"><b>21 km/h</b><span>W</span></div><span class="e">E</span></div>
          <span class="n">S</span>
        </div>
      </div>

      <div class="card rain">
        <h3 class="head"><svg class="i0"><use href="#drop"/></svg>Amount of Rain</h3>
        <p class="value">0 mm</p>
        <p class="body">in the last<br>Hour.</p>
        <p class="note">Lorem ipsum dolor sit amet.</p>
      </div>

      <div class="card stat">
        <h3 class="head"><svg class="i1"><use href="#thermo"/></svg>Feels Like</h3>
        <p class="value">7°</p>
        <p class="note">Lorem ipsum dolor sit amet, consectetur adipisicing.</p>
      </div>
      <div class="card stat">
        <h3 class="head"><svg class="i3"><use href="#waves"/></svg>Humidity</h3>
        <p class="value">52%</p>
        <p class="note">Lorem ipsum dolor sit amet, consectetur adipisicing.</p>
      </div>
      <div class="card stat">
        <h3 class="head"><svg class="i3"><use href="#eye"/></svg>Visibility</h3>
        <p class="value">10 km</p>
        <p class="note">Lorem ipsum dolor sit amet, consectetur adipisicing.</p>
      </div>
      <div class="card pressure">
        <h3 class="head"><svg class="i2"><use href="#gauge"/></svg>Air pressure</h3>
        <div class="dial">
          <svg viewBox="0 0 160 160"><circle cx="80" cy="80" r="79" fill="none" stroke="#64748b" stroke-width="2" stroke-dasharray="6 3.927"/></svg>
          <b>=</b><b>1010</b><span>hPa</span>
        </div>
      </div>
    </section>
  </main>
</div>
</body>
</html>
```
FILE: styles.css
```css
* { box-sizing: border-box; margin: 0; padding: 0; }
body { font-family: Roboto, "Liberation Sans", sans-serif; font-size: 20px; line-height: 30px; color: #fff; background: #334155; }
h1, h2, h3 { font-weight: 400; }
svg { display: block; fill: currentColor; flex: none; }
.defs { position: absolute; width: 0; height: 0; }

.app { display: flex; height: 1293px; border-top: 1px solid #53565a; border-bottom: 1px solid #3f454e; overflow: hidden; }

/* Sidebar */
.sidebar { width: 400px; flex: none; padding: 10px; background: #1e293b; }
.brand { font-size: 37.5px; line-height: 45px; padding-top: 1px; margin-bottom: -1px; }
.search { display: flex; gap: 10px; margin: 20px 0 25px; }
.search-input { width: 238px; height: 40px; padding: 0 5px; border: 0; border-radius: 7.5px; background: #475569; font: 20px/30px Roboto, sans-serif; color: #fff; }
.search-input::placeholder { color: #94a3b8; opacity: 1; }
.search-btn { width: 40px; height: 40px; border: 0; border-radius: 7.5px; background: #475569; color: #fff; opacity: .5; display: flex; justify-content: center; padding-top: 9px; }
.search-btn svg { width: 21px; height: 21px; }
.cities { display: flex; flex-direction: column; gap: 20px; }
.city { height: 195px; padding: 10px; border-radius: 10px; background: #475569; display: flex; flex-direction: column; justify-content: space-between; }
.dim { opacity: .5; }
.city-top, .city-bottom { display: flex; justify-content: space-between; }
.city-top { padding-top: 1px; }
.city-bottom { align-items: center; }
.city h2 { font-size: 25px; line-height: 35px; }
.time { font-size: 17.5px; line-height: 25px; }
.remove { display: flex; gap: 3.5px; margin-top: 10px; font-size: 17.5px; line-height: 25px; opacity: .5; }
.remove svg { width: 16.4px; height: 18.75px; margin-top: 1.5px; }
.city-temp { font-size: 45px; line-height: 51px; margin-top: -1px; }
.hl b { font-weight: 400; margin-left: 20px; }

/* Main */
.main { flex: 1; display: flex; flex-direction: column; align-items: center; background: linear-gradient(#64748b, #334155); }
.back { width: 31px; height: 31px; margin: 14px 0 0 12px; align-self: flex-start; }
.hero { height: 277px; margin-top: 23px; display: flex; flex-direction: column; gap: 10px; align-items: center; }
.hero h2 { font-size: 45px; line-height: 50px; padding-top: 1px; margin-bottom: -1px; }
.hero-temp { font-size: 75px; line-height: 75px; font-weight: 100; }
.hero-desc { font-size: 22.5px; line-height: 35px; }

.grid { width: 1600px; height: 922px; display: grid; gap: 20px; grid-template-columns: repeat(6, 250px); grid-template-rows: repeat(4, 215.5px); }
.card { border-radius: 10px; background: #1e293b; padding: 16px 15px 15px; display: flex; flex-direction: column; min-width: 0; }
.head { display: flex; gap: 8.5px; font-size: 17.5px; line-height: 25px; color: #8e949d; }
.head svg { height: 18.75px; margin-top: 1.5px; }
.i0 { width: 14.1px; } .i1 { width: 18.75px; } .i2 { width: 16.4px; } .i3 { width: 21.1px; }

.hourly { grid-column: span 4; padding-top: 13px; }
.hourly .head { height: 32px; border-bottom: 2px solid #475569; }
.hourly .head svg { margin-top: .5px; }
.hours { display: flex; gap: 50px; margin-top: 10px; overflow: hidden; font-size: 25px; line-height: 35px; }
.hours > div { flex: none; width: 62.25px; display: flex; flex-direction: column; align-items: center; }
.hours svg { width: 62px; height: 66px; }
.scroll i { display: block; width: 394px; height: 10px; background: #94a3b8; }

.mapcard { grid-column: span 2; grid-row: span 2; }
.mapbox { position: relative; height: 390.5px; margin-top: 5px; border-radius: 10px; overflow: hidden; }
.mapsvg { width: 490px; height: 390.5px; }
.shield-blue { fill: #3b78cf; }
.shield-yellow { fill: #fdd835; stroke: #d9a514; stroke-width: 2.5; }
.num { font: 500 33px Roboto, sans-serif; text-anchor: middle; fill: #4a3b00; }
.white { fill: #fff; font-weight: 700; }
.place { font: 400 44px Roboto, sans-serif; fill: #202124; stroke: #fff; stroke-width: 7; stroke-linejoin: round; paint-order: stroke; }
.place .big { font-size: 68px; font-weight: 500; }
.place .green { font-size: 50px; fill: #188038; }
.place .slant { font-style: italic; }
.maptype { position: absolute; left: 13px; top: 13px; display: flex; height: 50px; border-radius: 2px; background: #fff; box-shadow: 0 1px 4px rgba(0,0,0,.3); font-size: 22.5px; line-height: 48px; color: #565656; text-align: center; }
.maptype span { width: 126px; }
.maptype .on { width: 111px; color: #000; font-weight: 500; border-right: 1px solid #e6e6e6; }
.ctl { position: absolute; left: 428px; width: 50px; height: 50px; border-radius: 2px; background: #fff; box-shadow: 0 1px 4px rgba(0,0,0,.3); display: flex; flex-direction: column; align-items: center; justify-content: center; }
.ctl svg { width: 22px; height: 22px; }
.full { top: 13px; }
.peg { top: 169px; }
.ctl.peg svg { height: 37px; }
.zoom { top: 259px; height: 101px; justify-content: space-between; padding: 14px 0; }
.zoom i { width: 37px; height: 1px; background: #e6e6e6; }
.google { position: absolute; left: 12px; top: 358px; font: 500 23.5px/30px Roboto, sans-serif; letter-spacing: -.9px; text-shadow: 0 0 2px #fff, 0 0 2px #fff; }
.gb { color: #4285f4; } .gr { color: #ea4335; } .gy { color: #fbbc05; } .gg { color: #34a853; }
.terms { position: absolute; right: 0; bottom: 0; height: 17px; display: flex; gap: 15px; padding: 0 8px 0 4px; background: rgba(245,245,245,.75); font-size: 12.5px; line-height: 17px; color: #1f1f1f; }

.daily { grid-column: span 2; grid-row: span 3; padding-bottom: 0; }
.daily .head { height: 36.5px; margin-bottom: 9.5px; border-bottom: 2px solid #475569; }
.days > div { height: 76.5px; padding-top: 4px; display: flex; align-items: center; border-bottom: 2px solid #475569; }
.days > div:last-child { border-color: transparent; }
.days > div > span { width: 155px; }
.days svg { width: 42px; height: 44px; }
.days p { width: 196px; margin-left: auto; display: flex; justify-content: space-between; align-items: center; }
.days i { width: 70px; height: 5px; border-radius: 2.5px; background: #64748b; }

.wide { grid-column: span 2; justify-content: space-between; }
.good { font-weight: 700; line-height: 30px; }
.note { font-size: 17.5px; line-height: 25px; }
.light { font-weight: 300; padding-top: 1px; margin-bottom: -1px; }
.scale { height: 10px; border-radius: 5px; background: linear-gradient(90deg, #3b82f6, #22c55e, #ef4444); }
.value { font-size: 37.5px; line-height: 45px; }
.uv .value, .rain .value { margin-top: 15px; }
.low { font-size: 22.5px; line-height: 35px; font-weight: 500; margin-top: -1.5px; }
.uv .scale { margin: 15.5px 0 16px; }
.sunrow { display: flex; align-items: center; margin-top: 25px; height: 38px; font-size: 30px; }
.sunrow .s { width: 37.5px; height: 37.5px; }
.sunrow .a { width: 28.1px; height: 37.5px; margin-left: 9.5px; }
.down { transform: rotate(180deg); }
.sunrow span { margin-left: auto; }
.sunset hr { border: 0; height: 3px; flex: none; margin-top: 26px; border-radius: 1.5px; background: #8e949d; }

.compass { position: relative; width: 160px; height: 160px; margin: 0 auto; border: 2px solid #64748b; border-radius: 50%; display: flex; flex-direction: column; align-items: center; justify-content: space-between; padding: 5px 0; font-size: 15px; line-height: 20px; font-weight: 500; color: #626a76; }
.mid { width: 138px; display: grid; grid-template-columns: 1fr 80px 1fr; align-items: center; }
.e { text-align: right; }
.w { color: #fff; font-weight: 400; }
.hub { width: 80px; height: 80px; margin: -10px 0; border-radius: 50%; background: #475569; box-shadow: 0 12.5px 18px -4px rgba(0,0,0,.15); display: flex; flex-direction: column; align-items: center; justify-content: center; color: #fff; }
.hub b { font-weight: 700; }
.hub span { font-weight: 300; }
.tick { position: absolute; background: #64748b; }
.tn, .ts { left: 73px; width: 10px; height: 5px; }
.tn { top: -6.5px; clip-path: polygon(0 100%, 50% 0, 100% 100%); }
.ts { bottom: -6.5px; clip-path: polygon(0 0, 50% 100%, 100% 0); }
.te, .tw { top: 73px; width: 6px; height: 10px; }
.te { right: -6.5px; clip-path: polygon(0 0, 100% 50%, 0 100%); }
.tw { left: -6.5px; background: #fff; clip-path: polygon(100% 0, 0 50%, 100% 100%); }

.rain .note { margin-top: 14px; }
.stat { justify-content: space-between; padding-bottom: 14px; }
.dial { position: relative; width: 160px; height: 160px; margin: -.5px auto 0; display: flex; flex-direction: column; align-items: center; justify-content: center; }
.dial svg { position: absolute; left: 0; top: 0; width: 160px; height: 160px; }
.dial span { font-size: 17.5px; line-height: 25px; font-weight: 300; }
```
